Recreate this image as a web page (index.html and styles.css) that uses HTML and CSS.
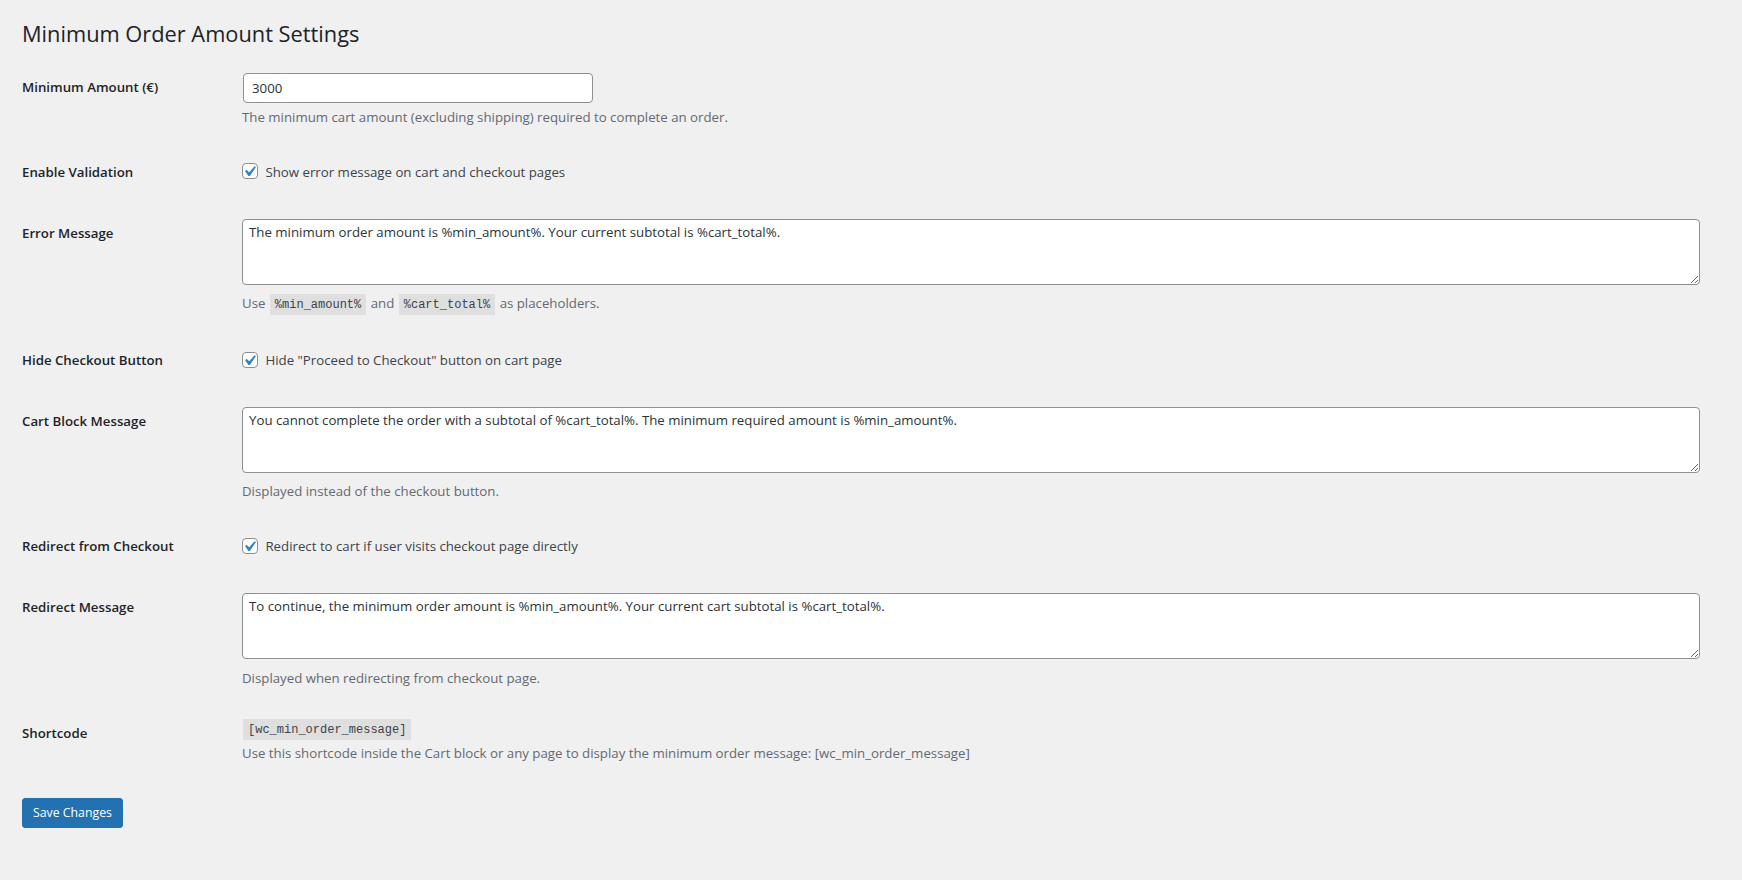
FILE: index.html
```
<!DOCTYPE html>
<html lang="en">
<head>
<meta charset="utf-8">
<title>Minimum Order Amount Settings</title>
<link rel="stylesheet" href="styles.css">
</head>
<body>
<div class="wrap">
  <h1 class="page-title">Minimum Order Amount Settings</h1>
  <form class="settings-form">
    <table class="form-table">
      <tbody>
        <tr>
          <th scope="row"><label for="min-amount">Minimum Amount (€)</label></th>
          <td>
            <input id="min-amount" type="text" class="regular-text" value="3000">
            <p class="description">The minimum cart amount (excluding shipping) required to complete an order.</p>
          </td>
        </tr>
        <tr>
          <th scope="row">Enable Validation</th>
          <td>
            <label class="check-label"><span class="checkbox"><svg viewBox="0 0 20 20"><path d="M14.83 4.89l1.34.94-5.81 8.38H9.02L5.78 9.67l1.34-1.25 2.57 2.4z"/></svg></span> Show error message on cart and checkout pages</label>
          </td>
        </tr>
        <tr>
          <th scope="row"><label for="err-msg">Error Message</label></th>
          <td>
            <textarea id="err-msg" class="large-text" rows="3">The minimum order amount is %min_amount%. Your current subtotal is %cart_total%.</textarea>
            <p class="description">Use <code>%min_amount%</code> and <code>%cart_total%</code> as placeholders.</p>
          </td>
        </tr>
        <tr>
          <th scope="row">Hide Checkout Button</th>
          <td>
            <label class="check-label"><span class="checkbox"><svg viewBox="0 0 20 20"><path d="M14.83 4.89l1.34.94-5.81 8.38H9.02L5.78 9.67l1.34-1.25 2.57 2.4z"/></svg></span> Hide "Proceed to Checkout" button on cart page</label>
          </td>
        </tr>
        <tr>
          <th scope="row"><label for="cart-msg">Cart Block Message</label></th>
          <td>
            <textarea id="cart-msg" class="large-text" rows="3">You cannot complete the order with a subtotal of %cart_total%. The minimum required amount is %min_amount%.</textarea>
            <p class="description">Displayed instead of the checkout button.</p>
          </td>
        </tr>
        <tr>
          <th scope="row">Redirect from Checkout</th>
          <td>
            <label class="check-label"><span class="checkbox"><svg viewBox="0 0 20 20"><path d="M14.83 4.89l1.34.94-5.81 8.38H9.02L5.78 9.67l1.34-1.25 2.57 2.4z"/></svg></span> Redirect to cart if user visits checkout page directly</label>
          </td>
        </tr>
        <tr>
          <th scope="row"><label for="redir-msg">Redirect Message</label></th>
          <td>
            <textarea id="redir-msg" class="large-text" rows="3">To continue, the minimum order amount is %min_amount%. Your current cart subtotal is %cart_total%.</textarea>
            <p class="description">Displayed when redirecting from checkout page.</p>
          </td>
        </tr>
        <tr>
          <th scope="row">Shortcode</th>
          <td>
            <code>[wc_min_order_message]</code>
            <p class="description">Use this shortcode inside the Cart block or any page to display the minimum order message: [wc_min_order_message]</p>
          </td>
        </tr>
      </tbody>
    </table>
    <p class="submit"><button type="button" class="button-primary">Save Changes</button></p>
  </form>
</div>
</body>
</html>
```
FILE: styles.css
```
html, body {
  margin: 0;
  padding: 0;
  background: #f0f0f1;
}
body {
  color: #3c434a;
  font-family: "Open Sans", "Noto Sans", sans-serif;
  font-size: 12.3px;
  line-height: 18px;
}
.wrap {
  margin: 10px 17px 0 22px;
}
.page-title {
  font-size: 21.8px;
  font-weight: 400;
  margin: 0;
  padding: 9px 0 4px;
  line-height: 30px;
  color: #1d2327;
}
.settings-form {
  margin: 0;
}
.form-table {
  border-collapse: collapse;
  margin-top: 5px;
  width: 100%;
}
.form-table th {
  vertical-align: top;
  text-align: left;
  padding: 20px 10px 20px 0;
  width: 200px;
  line-height: 18.2px;
  font-weight: 600;
  font-size: 13.25px;
  color: #1d2327;
}
.form-table td {
  padding: 15px 10px;
  line-height: 18.2px;
  vertical-align: middle;
  font-size: 13.25px;
}
.form-table td p {
  margin: 4px 0 0;
  font-size: 13.25px;
  line-height: 21px;
}
.description {
  color: #646970;
}
.regular-text {
  width: 350px;
  box-sizing: border-box;
  font-family: inherit;
  font-size: 13.25px;
  line-height: 28px;
  min-height: 30px;
  padding: 0 8px;
  margin: 0 1px;
  border: 1px solid #8c8f94;
  border-radius: 4px;
  background: #fff;
  color: #2c3338;
  vertical-align: middle;
}
.large-text {
  width: 99%;
  box-sizing: border-box;
  font-family: inherit;
  font-size: 13.25px;
  line-height: 20px;
  padding: 2px 6px;
  margin: 0 1px 0 0;
  border: 1px solid #8c8f94;
  border-radius: 4px;
  background: #fff;
  color: #2c3338;
  resize: vertical;
  vertical-align: baseline;
}
.check-label {
  display: inline-block;
  margin: 5px 0 7px;
  line-height: 19px;
  color: #3c434a;
}
.checkbox {
  display: inline-block;
  position: relative;
  width: 16px;
  height: 16px;
  box-sizing: border-box;
  border: 1px solid #8c8f94;
  border-radius: 4px;
  background: #fff;
  margin: -4px 4px 0 0;
  vertical-align: middle;
}
.checkbox svg {
  position: absolute;
  left: -4px;
  top: -3px;
  width: 21px;
  height: 21px;
  fill: #3582c4;
}
code {
  padding: 4px 5px 3px;
  margin: 0 1px;
  background: rgba(0, 0, 0, 0.07);
  font-family: "Liberation Mono", monospace;
  font-size: 12px;
  color: #3c434a;
}
.submit {
  margin: 19px 0 0;
  padding: 0;
}
.button-primary {
  display: inline-block;
  font-family: inherit;
  font-size: 12.3px;
  line-height: 28px;
  min-height: 30px;
  padding: 0 10px;
  margin: 0;
  border: 1px solid #2271b1;
  border-radius: 3px;
  background: #2271b1;
  color: #fff;
  cursor: pointer;
}
```
